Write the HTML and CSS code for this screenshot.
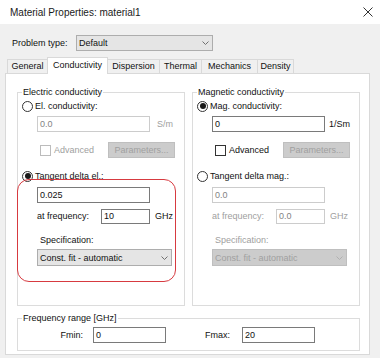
FILE: index.html
```html
<!DOCTYPE html>
<html lang="en">
<head>
  <meta charset="UTF-8">
  <title>Material Properties: material1</title>
  <link rel="stylesheet" href="styles.css">
</head>
<body>

  <div class="titlebar">
    <span class="title">Material Properties: material1</span>
    <svg class="close" width="10" height="10" viewBox="0 0 10 10">
      <path d="M0.5 0.5 L9.5 9.5 M9.5 0.5 L0.5 9.5" stroke="#333" stroke-width="1" fill="none"/>
    </svg>
  </div>

  <div class="dialog">
    <div class="problem-row">
      <span class="problem-label">Problem type:</span>
      <div class="combo">
        <span>Default</span>
        <svg class="chev" width="7" height="4" viewBox="0 0 7 4"><path d="M0.5 0.5 L3.5 3.5 L6.5 0.5" stroke="#707070" fill="none"/></svg>
      </div>
    </div>

    <div class="tabs">
      <div class="tab tab-general">General</div>
      <div class="tab tab-cond active">Conductivity</div>
      <div class="tab tab-disp">Dispersion</div>
      <div class="tab tab-thermal">Thermal</div>
      <div class="tab tab-mech">Mechanics</div>
      <div class="tab tab-density">Density</div>
    </div>

    <div class="panel">
      <div class="groups">

        <!-- Electric -->
        <fieldset class="group">
          <legend>Electric conductivity</legend>

          <div class="radio-row">
            <span class="radio"></span>
            <span>El. conductivity:</span>
          </div>
          <div class="field-row">
            <div class="textbox disabled">0.0</div>
            <span class="unit muted">S/m</span>
          </div>
          <div class="check-row">
            <div class="check-wrap">
              <span class="check disabled"></span>
              <span class="muted">Advanced</span>
            </div>
            <div class="btn disabled">Parameters...</div>
          </div>

          <div class="radio-row second">
            <span class="radio checked"></span>
            <span>Tangent delta el.:</span>
          </div>
          <div class="field-row tight">
            <div class="textbox">0.025</div>
          </div>
          <div class="field-row tight">
            <span class="freq-label">at frequency:</span>
            <div class="textbox small">10</div>
            <span class="unit-ghz">GHz</span>
          </div>
          <div class="spec-label">Specification:</div>
          <div class="select">
            <span>Const. fit - automatic</span>
            <svg class="chev" width="7" height="4" viewBox="0 0 7 4"><path d="M0.5 0.5 L3.5 3.5 L6.5 0.5" stroke="#707070" fill="none"/></svg>
          </div>

          <div class="highlight"></div>
        </fieldset>

        <!-- Magnetic -->
        <fieldset class="group">
          <legend>Magnetic conductivity</legend>

          <div class="radio-row">
            <span class="radio checked"></span>
            <span>Mag. conductivity:</span>
          </div>
          <div class="field-row">
            <div class="textbox">0</div>
            <span class="unit unit-sm">1/Sm</span>
          </div>
          <div class="check-row">
            <div class="check-wrap">
              <span class="check"></span>
              <span>Advanced</span>
            </div>
            <div class="btn disabled">Parameters...</div>
          </div>

          <div class="radio-row second">
            <span class="radio"></span>
            <span>Tangent delta mag.:</span>
          </div>
          <div class="field-row tight">
            <div class="textbox disabled">0.0</div>
          </div>
          <div class="field-row tight">
            <span class="freq-label muted">at frequency:</span>
            <div class="textbox small disabled">0.0</div>
            <span class="unit-ghz muted">GHz</span>
          </div>
          <div class="spec-label muted">Specification:</div>
          <div class="select disabled">
            <span>Const. fit - automatic</span>
            <svg class="chev" width="7" height="4" viewBox="0 0 7 4"><path d="M0.5 0.5 L3.5 3.5 L6.5 0.5" stroke="#b0b0b0" fill="none"/></svg>
          </div>
        </fieldset>

      </div>

      <fieldset class="group freq">
        <legend>Frequency range [GHz]</legend>
        <div class="freq-row">
          <span class="fmin-label">Fmin:</span>
          <div class="textbox range">0</div>
          <span class="fmax-label">Fmax:</span>
          <div class="textbox range">20</div>
        </div>
      </fieldset>
    </div>
  </div>

</body>
</html>
```

FILE: styles.css
```css
body {
  margin: 0;
  font-family: "Liberation Sans", Arial, sans-serif;
  font-size: 9px;
  color: #111;
  background-color: #f0f0f0;
  width: 380px;
  height: 358px;
  overflow: hidden;
}

.titlebar {
  background-color: #fff;
  height: 24px;
  display: flex;
  align-items: center;
  justify-content: space-between;
  padding: 0 7px 0 10px;
}

.title {
  font-size: 10px;
  color: #1a1a1a;
}

.dialog {
  padding: 0 10px 0 5px;
}

.problem-row {
  display: flex;
  align-items: center;
  margin-top: 11px;
  height: 16px;
  padding-left: 7px;
}

.problem-label {
  width: 64px;
}

.combo,
.select {
  box-sizing: border-box;
  display: flex;
  align-items: center;
  justify-content: space-between;
  background-color: #e5e5e5;
  border: 1px solid #adadad;
  padding: 0 3px 0 2px;
}

.combo {
  width: 137px;
  height: 16px;
}

.chev {
  display: block;
}

/* tabs */
.tabs {
  display: flex;
  align-items: flex-end;
  margin-top: 6px;
  height: 16px;
  padding-left: 2px;
  position: relative;
  z-index: 1;
}

.tab {
  box-sizing: border-box;
  height: 14px;
  line-height: 13px;
  text-align: center;
  border: 1px solid #d9d9d9;
  border-bottom: none;
  margin-right: -1px;
  background-color: #f0f0f0;
}

.tab.active {
  height: 17px;
  line-height: 14px;
  margin-bottom: -1px;
  background-color: #fff;
  position: relative;
  z-index: 2;
}

.tab-general { width: 41px; }
.tab-cond { width: 61px; }
.tab-disp { width: 53px; }
.tab-thermal { width: 43px; }
.tab-mech { width: 57px; }
.tab-density { width: 37px; }

.panel {
  background-color: #fff;
  border: 1px solid #d9d9d9;
  padding: 12px 9px 3px 11px;
}

/* group boxes */
.groups {
  display: flex;
  gap: 7px;
}

.group {
  position: relative;
  box-sizing: border-box;
  width: 168px;
  margin: 0;
  padding: 0 4px 39px 4px;
  border: 1px solid #dcdcdc;
  min-width: 0;
}

.group legend {
  padding: 0 1px;
  line-height: 12px;
}

.radio-row {
  display: flex;
  align-items: center;
  gap: 2px;
  height: 12px;
  margin-top: 2px;
}

.radio-row.second {
  margin-top: 12px;
}

.radio {
  box-sizing: border-box;
  width: 11px;
  height: 11px;
  border: 1px solid #333;
  border-radius: 50%;
  background-color: #fff;
  display: flex;
  align-items: center;
  justify-content: center;
}

.radio.checked::after {
  content: "";
  width: 6px;
  height: 6px;
  border-radius: 50%;
  background-color: #1a1a1a;
}

.field-row {
  display: flex;
  align-items: center;
  height: 16px;
  margin-top: 4px;
  padding-left: 15px;
}

.field-row.tight {
  margin-top: 5px;
}

.textbox {
  box-sizing: border-box;
  width: 113px;
  height: 16px;
  line-height: 14px;
  border: 1px solid #7a7a7a;
  background-color: #fff;
  padding-left: 2px;
}

.textbox.small {
  width: 49px;
  height: 15px;
  line-height: 13px;
}

.textbox.disabled {
  border-color: #cccccc;
  color: #838383;
}

.unit {
  margin-left: 7px;
}

.unit-sm {
  margin-left: 4px;
}

.unit-ghz {
  margin-left: 5px;
}

.freq-label {
  width: 64px;
}

.muted {
  color: #a0a0a0;
}

.check-row {
  display: flex;
  align-items: center;
  height: 16px;
  margin-top: 10px;
  padding-left: 18px;
}

.check-wrap {
  display: flex;
  align-items: center;
  gap: 3px;
  width: 68px;
}

.check {
  box-sizing: border-box;
  width: 11px;
  height: 11px;
  border: 1px solid #333;
  background-color: #fff;
}

.check.disabled {
  border-color: #bcbcbc;
}

.btn {
  box-sizing: border-box;
  width: 67px;
  height: 16px;
  line-height: 14px;
  text-align: center;
  background-color: #e1e1e1;
  border: 1px solid #adadad;
}

.btn.disabled {
  background-color: #cccccc;
  border-color: #bfbfbf;
  color: #a0a0a0;
}

.spec-label {
  height: 12px;
  line-height: 12px;
  margin-top: 10px;
  padding-left: 18px;
}

.select {
  width: 135px;
  height: 17px;
  margin-top: 3px;
  margin-left: 15px;
}

.select.disabled {
  background-color: #cccccc;
  border-color: #bfbfbf;
  color: #a0a0a0;
}

/* red annotation round the tangent delta block */
.highlight {
  position: absolute;
  left: -1px;
  top: 81px;
  width: 159px;
  height: 103px;
  border: 1.5px solid #d73a40;
  border-radius: 12px;
  box-sizing: border-box;
}

/* frequency range */
.group.freq {
  width: 343px;
  margin-top: 6px;
  padding-bottom: 7px;
}

.freq-row {
  display: flex;
  align-items: center;
  height: 16px;
  margin-top: 3px;
}

.fmin-label {
  box-sizing: border-box;
  width: 71px;
  text-align: right;
  padding-right: 10px;
}

.fmax-label {
  box-sizing: border-box;
  width: 76px;
  text-align: right;
  padding-right: 12px;
}

.textbox.range {
  width: 73px;
}
```
